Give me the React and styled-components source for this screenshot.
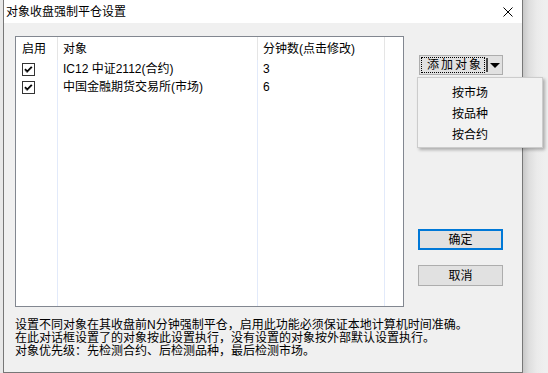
import React from "react";
import styled, { createGlobalStyle } from "styled-components";

const GlobalStyle = createGlobalStyle`
  html, body { margin: 0; padding: 0; background: #e8e8e8; }
  body {
    font-family: "Liberation Sans", "Noto Sans CJK SC", sans-serif;
    font-size: 12px;
    color: #000;
  }
`;

const Page = styled.div`
  display: flex;
  width: 548px;
  height: 373px;
  padding-left: 3px;
  box-sizing: border-box;
  background: #e8e8e8;
  overflow: hidden;
`;

const Dialog = styled.div`
  width: 520px;
  height: 373px;
  box-sizing: border-box;
  border: 1px solid #777;
  border-top: none;
  display: flex;
  flex-direction: column;
  background: #f0f0f0;
`;

const Shadow = styled.div`
  flex: 1;
  background: linear-gradient(to right, #c8c8c8, #dedede 6px, #ebebeb 14px, #efefef 22px);
`;

const TitleBar = styled.div`
  height: 23px;
  flex: none;
  background: #fff;
  display: flex;
  align-items: center;
  justify-content: space-between;
  padding: 0 9px 0 2px;
`;

const Title = styled.div`
  font-size: 12px;
  line-height: 14px;
  padding-top: 1px;
`;

const Body = styled.div`
  flex: 1;
  display: flex;
  padding: 13px 0 0 11px;
  gap: 14px;
`;

const LeftCol = styled.div`
  display: flex;
  flex-direction: column;
  width: 389px;
`;

const ListBox = styled.div`
  height: 271px;
  box-sizing: border-box;
  border: 1px solid #828790;
  background: #fff;
  display: flex;
`;

const Column = styled.div`
  width: ${(p) => p.$w}px;
  flex: none;
  box-sizing: border-box;
  border-right: ${(p) => (p.$line ? "1px solid #e2eafa" : "none")};
  display: flex;
  flex-direction: column;
`;

const HeaderCell = styled.div`
  height: 23px;
  display: flex;
  align-items: center;
  padding-left: ${(p) => p.$pad}px;
  line-height: 14px;
  box-shadow: ${(p) => (p.$line ? "1px 0 0 #e5e5e5" : "none")};
  white-space: nowrap;
`;

const Cell = styled.div`
  height: 18px;
  display: flex;
  align-items: center;
  padding-left: ${(p) => p.$pad}px;
  line-height: 14px;
  white-space: nowrap;
`;

const Note = styled.div`
  margin-top: 12px;
  font-size: 12px;
  line-height: 13px;
  white-space: pre;
`;

const RightCol = styled.div`
  display: flex;
  flex-direction: column;
  width: 85px;
  padding-top: 19px;
`;

const SplitWrap = styled.div`
  position: relative;
  margin-left: 1px;
`;

const SplitButton = styled.div`
  width: 84px;
  height: 20px;
  box-sizing: border-box;
  border: 1px solid #adadad;
  background: #e1e1e1;
  display: flex;
  align-items: stretch;
`;

const SplitMain = styled.div`
  width: 64px;
  margin: 1px 1px 1px 1px;
  box-sizing: border-box;
  border: 1px dotted #000;
  display: flex;
  align-items: center;
  justify-content: center;
  padding-left: 4px;
  letter-spacing: 2px;
  line-height: 14px;
`;

const SplitSep = styled.div`
  width: 2px;
  margin: 2px 0;
  background: #4a4a4a;
`;

const SplitArrow = styled.div`
  flex: 1;
  display: flex;
  align-items: center;
  justify-content: center;
`;

const Menu = styled.div`
  position: absolute;
  top: 22px;
  left: -2px;
  width: 126px;
  box-sizing: border-box;
  background: #f2f2f2;
  border: 1px solid #cccccc;
  box-shadow: 2px 2px 3px rgba(0, 0, 0, 0.28);
  padding: 4px 0 2px;
  z-index: 5;
`;

const MenuItem = styled.div`
  height: 21px;
  display: flex;
  align-items: center;
  padding-left: 34px;
  line-height: 14px;
`;

const Button = styled.div`
  width: 85px;
  height: 21px;
  box-sizing: border-box;
  margin-top: ${(p) => p.$mt}px;
  border: ${(p) => (p.$primary ? "2px solid #0078d7" : "1px solid #adadad")};
  background: #e1e1e1;
  display: flex;
  align-items: center;
  justify-content: center;
  line-height: 14px;
`;

const CloseIcon = () => (
  <svg width="10" height="10" viewBox="0 0 10 10">
    <path d="M0.5 0.5 L9.5 9.5 M9.5 0.5 L0.5 9.5" stroke="#000" strokeWidth="1" fill="none" />
  </svg>
);

const CheckBox = () => (
  <svg width="13" height="13" viewBox="0 0 13 13">
    <rect x="0.5" y="0.5" width="12" height="12" fill="#fff" stroke="#333" />
    <path d="M3 6.2 L5.2 8.6 L9.8 3.8" stroke="#000" strokeWidth="1.9" fill="none" />
    <path d="M3 7.4 L5.2 9.8 L9.8 5" stroke="#9a9a9a" strokeWidth="0.8" fill="none" />
  </svg>
);

const DownTriangle = () => (
  <svg width="10" height="5" viewBox="0 0 10 5">
    <path d="M0 0 L10 0 L5 5 Z" fill="#000" />
  </svg>
);

const rows = [
  { name: "IC12 中证2112(合约)", min: "3" },
  { name: "中国金融期货交易所(市场)", min: "6" },
];

export default function App() {
  return (
    <>
      <GlobalStyle />
      <Page>
        <Dialog>
          <TitleBar>
            <Title>对象收盘强制平仓设置</Title>
            <CloseIcon />
          </TitleBar>
          <Body>
            <LeftCol>
              <ListBox>
                <Column $w={42} $line>
                  <HeaderCell $pad={6} $line>启用</HeaderCell>
                  {rows.map((r, i) => (
                    <Cell key={i} $pad={6}>
                      <CheckBox />
                    </Cell>
                  ))}
                </Column>
                <Column $w={200} $line>
                  <HeaderCell $pad={5} $line>对象</HeaderCell>
                  {rows.map((r, i) => (
                    <Cell key={i} $pad={5}>{r.name}</Cell>
                  ))}
                </Column>
                <Column $w={127} $line>
                  <HeaderCell $pad={5} $line>分钟数(点击修改)</HeaderCell>
                  {rows.map((r, i) => (
                    <Cell key={i} $pad={5}>{r.min}</Cell>
                  ))}
                </Column>
                <Column $w={18}>
                  <HeaderCell $pad={0} />
                </Column>
              </ListBox>
              <Note>
                {"设置不同对象在其收盘前N分钟强制平仓，启用此功能必须保证本地计算机时间准确。\n在此对话框设置了的对象按此设置执行，没有设置的对象按外部默认设置执行。\n对象优先级：先检测合约、后检测品种，最后检测市场。"}
              </Note>
            </LeftCol>
            <RightCol>
              <SplitWrap>
                <SplitButton>
                  <SplitMain>添加对象</SplitMain>
                  <SplitSep />
                  <SplitArrow>
                    <DownTriangle />
                  </SplitArrow>
                </SplitButton>
                <Menu>
                  <MenuItem>按市场</MenuItem>
                  <MenuItem>按品种</MenuItem>
                  <MenuItem>按合约</MenuItem>
                </Menu>
              </SplitWrap>
              <Button $primary $mt={154}>确定</Button>
              <Button $mt={15}>取消</Button>
            </RightCol>
          </Body>
        </Dialog>
        <Shadow />
      </Page>
    </>
  );
}
